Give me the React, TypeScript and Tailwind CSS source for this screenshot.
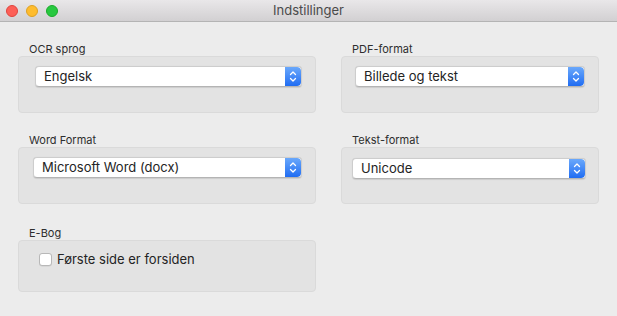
import { ReactNode } from "react";

const font = { fontFamily: '"Inter", "Noto Sans", "Liberation Sans", sans-serif' };

function Stepper() {
    return (
        <div className="w-[16px] h-full rounded-r-[4px] bg-gradient-to-b from-[#6aa8fb] to-[#1f6cf2] flex items-center justify-center">
            <svg width="8" height="13" viewBox="0 0 8 13" fill="none">
                <path d="M1.5 4.5 L4 2 L6.5 4.5" stroke="white" strokeWidth="1.3" strokeLinecap="round" strokeLinejoin="round" />
                <path d="M1.5 8.5 L4 11 L6.5 8.5" stroke="white" strokeWidth="1.3" strokeLinecap="round" strokeLinejoin="round" />
            </svg>
        </div>
    );
}

function Select({ valor }: { valor: string }) {
    return (
        <div className="h-[21px] flex items-stretch bg-white rounded-[4px] border border-[#cdcdcd] border-b-[#b4b4b4] shadow-[0_0.5px_1px_rgba(0,0,0,0.1)] overflow-hidden">
            <span className="flex-1 pl-[8px] text-[13px] leading-[19px] text-[#242424]">{valor}</span>
            <Stepper />
        </div>
    );
}

function Grupo({ label, alto, children, className = "" }: { label: string; alto: string; children: ReactNode; className?: string }) {
    return (
        <div className={className}>
            <div className="h-[14px] pl-[11px] text-[11px] leading-[14px] text-[#2e2e2e]">{label}</div>
            <div className={`${alto} rounded-[4px] bg-[#e3e3e3] border border-[#dadada]`}>{children}</div>
        </div>
    );
}

export default function App() {
    return (
        <div className="w-[617px] h-[316px] bg-[#ececec] overflow-hidden" style={font}>
            {/* Barra de título */}
            <div className="relative h-[22px] bg-gradient-to-b from-[#e9e7e9] to-[#d2d0d2] border-b border-[#b4b4b4] flex items-center justify-center">
                <div className="absolute left-[6px] top-[5px] flex gap-[8px]">
                    <span className="w-[12px] h-[12px] rounded-full bg-[#fd5f57] border border-[#e0443e]" />
                    <span className="w-[12px] h-[12px] rounded-full bg-[#febc2e] border border-[#dea123]" />
                    <span className="w-[12px] h-[12px] rounded-full bg-[#28c840] border border-[#1aab29]" />
                </div>
                <span className="text-[13px] text-[#4b4b4b]">Indstillinger</span>
            </div>

            {/* Contenido */}
            <div className="grid grid-cols-[298px_258px] gap-x-[25px] pl-[18px] pt-[20px]">
                <Grupo label="OCR sprog" alto="h-[57px]">
                    <div className="pt-[9px] pl-[16px] pr-[13px]">
                        <Select valor="Engelsk" />
                    </div>
                </Grupo>
                <Grupo label="PDF-format" alto="h-[57px]">
                    <div className="pt-[9px] pl-[13px] pr-[13px]">
                        <Select valor="Billede og tekst" />
                    </div>
                </Grupo>

                <Grupo label="Word Format" alto="h-[57px]" className="mt-[20px]">
                    <div className="pt-[9px] pl-[14px] pr-[13px]">
                        <Select valor="Microsoft Word (docx)" />
                    </div>
                </Grupo>
                <Grupo label="Tekst-format" alto="h-[57px]" className="mt-[20px]">
                    <div className="pt-[10px] pl-[10px] pr-[12px]">
                        <Select valor="Unicode" />
                    </div>
                </Grupo>

                <Grupo label="E-Bog" alto="h-[52px]" className="mt-[22px]">
                    <div className="pt-[10px] pl-[20px] flex items-center gap-[5px]">
                        <span className="w-[13px] h-[13px] rounded-[3px] bg-white border border-[#b8b8b8] shadow-[0_0.5px_0.5px_rgba(0,0,0,0.1)]" />
                        <span className="text-[13px] leading-[16px] text-[#242424]">Første side er forsiden</span>
                    </div>
                </Grupo>
            </div>
        </div>
    );
}
